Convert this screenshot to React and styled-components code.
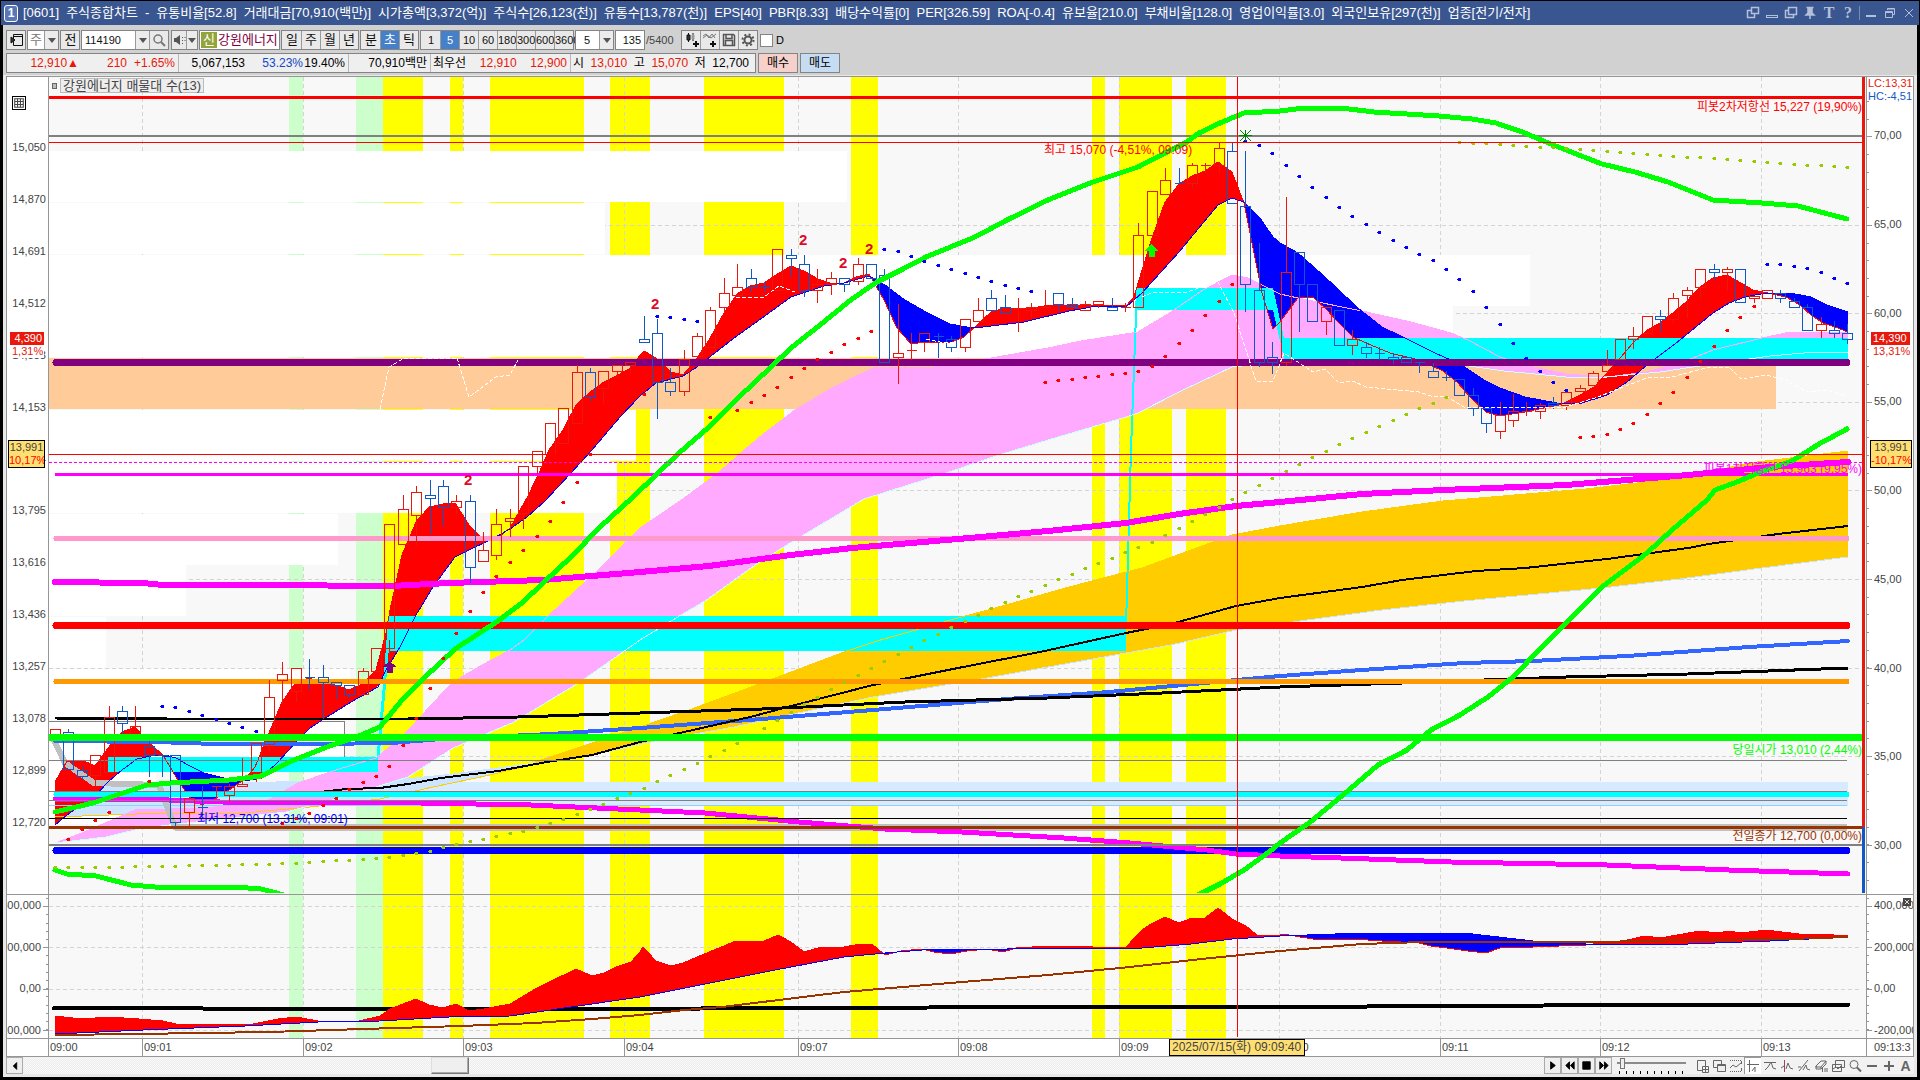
import React from "react";
import styled, { createGlobalStyle, css } from "styled-components";

const Global = createGlobalStyle`
  * { box-sizing: border-box; }
  body { margin: 0; background: #000; }
  button, input, select { font: inherit; color: inherit; margin: 0; padding: 0; border-radius: 0; }
`;

const FONT = `"Liberation Sans", "Noto Sans CJK KR", sans-serif`;
const RED = "#e8180c";
const BLUE = "#1158c7";

/* ---------- frame ---------- */
const Frame = styled.div`
  display: flex; flex-direction: column; height: 100vh; min-height: 480px;
  padding: 1px 0 3px; background: #000; overflow: hidden;
  font: 12px/14px ${FONT}; color: #000;
`;
const TitleBar = styled.header`
  display: flex; align-items: center; gap: 5px; flex: none; height: 24px; margin: 0 1px; padding: 0 1px 0 3px;
  background: #3a5690; color: #fff; font-size: 13px; white-space: nowrap;
`;
const Badge = styled.span`
  width: 14px; height: 17px; border: 1px solid #fff; border-radius: 3px; background: #5a78b8;
  font-weight: 700; font-size: 12px; line-height: 15px; text-align: center;
`;
const Title = styled.h1`
  display: flex; gap: 7px; margin: 0; flex: 1; min-width: 0; overflow: hidden; font: inherit; line-height: 20px;
`;
const WinTools = styled.div`display: flex; align-items: center; gap: 1px;`;
const WinButton = styled.button`
  display: grid; place-items: center; width: 18px; height: 20px; border: 0; background: none; color: #b4c0da;
  font: 700 16px/18px "Liberation Serif", serif;
`;
const WinRule = styled.i`width: 1px; height: 14px; margin: 0 1px; background: #7a8fae;`;
const Body = styled.main`
  display: flex; flex-direction: column; flex: 1; min-height: 0; margin: 0 3px; background: #d1d1d1;
`;
const Bar = styled.div`
  display: flex; align-items: stretch; flex: none; height: 20px; margin: ${p => (p.$info ? "3px 3px 2px" : "5px 3px 0")};
  gap: ${p => (p.$info ? 2 : 1)}px; white-space: nowrap;
  font-size: ${p => (p.$info ? 12 : 13)}px; line-height: 16px;
`;

/* ---------- toolbar ---------- */
const Group = styled.div`
  display: flex; align-items: stretch; flex: none; border: 1px solid #848484; background: #fff;
  margin-right: ${p => p.$gap || 0}px;
`;
const Tool = styled.button`
  display: grid; place-items: center; width: ${p => p.$w || 19}px; border: 0; overflow: visible;
  background: ${p => (p.$on ? "#4580c8" : "#e9e9e9")}; color: ${p => (p.$on ? "#fff" : "#111")};
  border-left: 1px solid ${p => (p.$first ? "transparent" : "#9a9a9a")};
  ${p => p.$digits && css`font-size: 11px;`}
`;
const Field = styled.input`
  width: ${p => p.$w}px; border: 0; background: #fff; padding: 0 ${p => (p.$name ? 0 : 3)}px;
  color: ${p => (p.$name ? "#800040" : "#111")}; font-size: ${p => (p.$name ? 13 : 11)}px;
  text-align: ${p => p.$align || "left"}; outline: 0;
`;
const Pick = styled.select`
  appearance: none; width: ${p => p.$w}px; border: 0; background: #fff; color: ${p => p.$color || "#111"};
  padding: 0 ${p => p.$pad || 2}px; outline: 0; font-size: ${p => (p.$pad ? 11 : 13)}px;
`;
const Arrow = styled.span`
  display: grid; place-items: center; width: ${p => p.$w || 14}px; background: #ececec; border-left: 1px solid #9a9a9a;
  &::after { content: ""; border: 4px solid transparent; border-top: 5px solid #555; border-bottom: 0; }
`;
const NewTag = styled.span`
  display: grid; place-items: center; width: 16px; margin: 1px; background: #93a53a; color: #fff;
`;
const Count = styled.span`align-self: center; color: #444; width: 34px; font-size: 11px;`;
const Check = styled.label`
  display: flex; align-items: center; gap: 3px; font-size: 11px;
  input { appearance: none; width: 13px; height: 13px; border: 1px solid #848484; background: #fff; }
`;

/* ---------- quote bar ---------- */
const Quote = styled.dl`
  display: flex; flex: none; margin: 0; border: 1px solid #848484; background: #efefef; line-height: 18px;
`;
const QuoteCell = styled.div`
  display: flex; justify-content: ${p => p.$just || "flex-end"}; width: ${p => p.$w}px;
  padding: 0 3px 0 2px; border-right: 1px solid #b8b8b8;
  &:last-child { border-right: 0; padding-right: 6px; }
  dt, dd { margin: 0; }
`;
const Num = styled.dd`
  color: ${p => p.$c || "#000"}; width: ${p => (p.$w ? p.$w + "px" : "auto")}; text-align: right;
`;
const Order = styled.button`
  width: 40px; border: 1px solid #848484; background: ${p => p.$bg};
`;

/* ---------- chart ---------- */
const Work = styled.section`
  display: flex; flex-direction: column; flex: 1; min-height: 0; padding: 1px 3px 3px; background: #e8e8e8;
`;
const Chart = styled.div`
  display: grid; flex: 1; min-height: 0; border: 1px solid #969696; background: #fff;
  grid-template-columns: 42px minmax(0, 1fr) 47px; grid-template-rows: minmax(0, 817fr) minmax(0, 144fr) 18px;
  font-size: 11px; color: #444;
`;
const Plot = styled.div`
  position: relative; grid-column: 2; grid-row: 1 / 3; min-height: 0; background: #f8f8f8; overflow: hidden;
  > svg { display: block; width: 100%; height: 100%; }
`;
const Axis = styled.div`
  position: relative; display: flex; flex-direction: column; justify-content: space-between; min-height: 0;
  overflow: hidden; white-space: nowrap; grid-row: ${p => (p.$low ? 2 : 1)};
  ${p => (p.$side === "left"
    ? css`grid-column: 1; align-items: flex-end; border-right: 1px solid #969696; padding-right: ${p.$low ? 7 : 2}px;`
    : css`grid-column: 3; align-items: flex-start; border-left: 1px solid #969696; padding-left: 7px;`)}
  ${p => (p.$low
    ? css`border-top: 1px solid #969696; padding-top: 3px; padding-bottom: 1px;`
    : p.$side === "left" ? css`padding-top: 63px; padding-bottom: 65px;` : css`padding-top: 51px; padding-bottom: 42px;`)}
  > svg { position: absolute; inset: 0; width: 100%; height: 100%; }
`;
const Tick = styled.span`line-height: 14px; position: relative;`;
const Over = styled.div`
  position: absolute; z-index: 1; white-space: nowrap; line-height: 13px; overflow: hidden;
`;
const PriceTag = styled(Over)`
  ${p => (p.$side === "left" ? "left: 3px; width: 34px; text-align: right;" : "left: 4px; right: 3px;")}
  span { display: block; background: ${RED}; color: #fff; padding: 0 2px; }
  b { display: block; font-weight: 400; color: ${RED}; padding: 0 2px; background: #fff; }
`;
const CursorTag = styled(Over)`
  ${p => (p.$side === "left" ? "left: 1px; right: 3px;" : "left: 3px; right: 1px;")}
  border: 1px solid #000; background: #ffdf70; text-align: center;
  b { display: block; font-weight: 400; color: #f00; }
`;
const Limits = styled(Over)`
  left: 1px; top: 0;
  span { display: block; color: ${RED}; }
  span + span { color: ${BLUE}; }
`;
const Note = styled.span`
  position: absolute; white-space: nowrap; color: ${p => p.$c};
  font: ${p => (p.$bold ? "700 15px/14px " + FONT : "12px/14px " + FONT)};
  transform: translateY(-50%);
`;
const Legend = styled.div`
  position: absolute; left: 3px; top: 1px; display: flex; align-items: center; gap: 3px; color: #444;
  i { width: 5px; height: 6px; border: 1px solid #666; background: #bbb; }
  button { height: 15px; border: 1px solid #bbb; background: #eee; padding: 0 2px; line-height: 13px; font-size: 13px; }
`;
const TableButton = styled.button`
  position: absolute; left: 5px; top: 19px; width: 14px; height: 14px; border: 1px solid #000; background: #fff;
  display: grid; place-items: center;
`;
const ClosePane = styled.button`
  position: absolute; right: 2px; top: 3px; width: 8px; height: 8px; border: 0; background: #444; color: #fff; z-index: 1;
  display: grid; place-items: center;
`;
const Times = styled.div`
  position: relative; grid-column: 2; grid-row: 3; display: grid; border-top: 1px solid #969696; min-width: 0;
  grid-template-columns: 93fr 161fr 160fr 161fr 174fr 160fr 161fr 160fr 161fr 160fr 161fr 105fr;
`;
const TimeCell = styled.time`
  border-left: ${p => (p.$first ? 0 : 1)}px solid #969696; padding-left: 1px; min-width: 0; line-height: 16px; overflow: hidden; white-space: nowrap;
`;
const TimeEnd = styled.time`
  grid-column: 3; grid-row: 3; border-top: 1px solid #969696; border-left: 1px solid #969696; padding-left: 7px;
  line-height: 16px; overflow: hidden; white-space: nowrap;
`;
const TimeCorner = styled.div`grid-column: 1; grid-row: 3; border-top: 1px solid #969696; border-right: 1px solid #969696;`;
const TimeCursor = styled.time`
  position: absolute; top: 0; bottom: 0; border: 1px solid #000; background: #ffdf70; padding: 0 2px;
  font: 12px/14px ${FONT}; white-space: nowrap; overflow: hidden;
`;

/* ---------- bottom bar ---------- */
const Foot = styled.footer`display: flex; align-items: center; flex: none; height: 17px; background: #f2f2f2;`;
const Raised = styled.button`
  display: grid; place-items: center; flex: none; width: 17px; height: 17px; background: #efefef;
  border: 1px solid; border-color: #fff #777 #777 #fff; outline: 1px solid #aaa; outline-offset: -1px;
`;
const Scroll = styled.input`
  appearance: none; flex: 1; min-width: 0; height: 17px; outline: 0;
  background: repeating-conic-gradient(#ececec 0 25%, #fafafa 0 50%) 0 0 / 2px 2px;
  &::-webkit-slider-thumb {
    appearance: none; width: 38px; height: 17px; background: #efefef; border: 1px solid; border-color: #ddd #777 #777 #ddd;
    box-shadow: inset -1px -1px #aaa;
  }
`;
const Zoom = styled.input`
  appearance: none; width: 69px; height: 17px; margin: 0 7px 0 5px; outline: 0;
  background:
    linear-gradient(#8a8a8a, #8a8a8a) 0 5px / 100% 2px no-repeat,
    repeating-linear-gradient(90deg, #000 0 1px, transparent 1px 7px) 2px 14px / 100% 3px no-repeat;
  &::-webkit-slider-thumb { appearance: none; width: 5px; height: 11px; margin-top: -4px; background: #eee; border: 1px solid #777; }
`;
const Mini = styled.button`
  display: grid; place-items: center; flex: none; width: 17px; height: 17px; border: 0; color: #666;
  background: ${p => (p.$on ? "#fff" : "none")}; box-shadow: ${p => (p.$on ? "inset 1px 1px #999" : "none")};
  font: 700 14px/16px ${FONT};
`;

/* ---------- data ---------- */
const pts = s => s.trim().split(/\s+/).map(p => p.split(",").map(Number));
const cx = i => 55.5 + 13.375 * i;
const at = (p, x) => {
  if (x <= p[0][0]) return p[0][1];
  for (let k = 1; k < p.length; k++)
    if (x <= p[k][0]) {
      const [a, b] = [p[k - 1], p[k]];
      return a[1] + ((b[1] - a[1]) * (x - a[0])) / (b[0] - a[0] || 1);
    }
  return p[p.length - 1][1];
};

/* areas between two lines, split wherever the lines cross */
const between = (fast, slow) => {
  const up = [], down = [];
  const step = 3;
  for (let x = 55; x < 1848; x += step) {
    const x2 = Math.min(x + step, 1848);
    const f1 = at(fast, x), f2 = at(fast, x2), s1 = at(slow, x), s2 = at(slow, x2);
    (f1 + f2 <= s1 + s2 ? up : down).push(`M${x} ${f1}L${x2} ${f2}V${s2}L${x} ${s1}Z`);
  }
  return [up.join(""), down.join("")];
};

const FAST = pts(`55,782 67,761 84,761 95,766 108,748 122,732 135,727 148,742 163,755 176,777 189,797 202,805 216,798 229,790 245,779 255,767 269,733 282,702 296,682 309,678 322,682 335,685 349,690 362,684 376,670 386,633 390,610 402,555 416,522 429,507 443,504 455,503 469,525 484,541 496,539 510,528 524,503 527,498 539,473 549,450 563,430 576,405 590,392 604,382 616,376 631,368 640,355 644,351 656,358 671,372 683,375 697,358 709,340 724,313 737,294 750,286 764,283 779,273 791,266 804,271 818,279 830,283 844,283 856,277 869,274 884,300 897,328 911,344 926,342 938,342 952,342 964,337 979,323 991,312 1005,308 1018,308 1032,308 1044,306 1058,305 1126,306 1134,297 1139,280 1152,238 1165,202 1179,184 1192,176 1205,171 1218,162 1232,172 1244,203 1252,243 1262,293 1273,329 1280,322 1298,298 1313,297 1326,309 1339,323 1353,337 1366,343 1390,353 1419,360 1443,371 1458,383 1470,397 1486,412 1500,416 1525,412 1562,404 1580,395 1594,387 1607,373 1621,357 1633,343 1647,330 1660,323 1674,312 1686,302 1700,287 1713,278 1727,275 1741,283 1753,290 1768,293 1786,297 1800,305 1811,315 1823,323 1835,327 1848,332`);
const SLOW = pts(`55,825 67,815 96,795 108,782 122,770 137,759 151,756 165,755 176,758 188,765 204,773 224,778 245,781 261,778 278,762 298,740 310,728 327,717 351,702 378,687 386,670 400,647 416,615 433,587 455,557 469,550 490,540 510,529 527,517 545,501 571,473 592,450 620,417 640,396 656,383 683,376 697,367 734,338 762,318 791,297 824,286 844,283 869,276 885,285 905,300 926,312 950,324 967,327 983,327 1024,322 1069,311 1097,306 1126,307 1142,293 1179,252 1218,205 1232,198 1244,202 1260,218 1273,237 1280,243 1298,253 1325,277 1358,308 1382,327 1407,339 1435,353 1460,364 1484,380 1500,388 1525,397 1562,404 1582,403 1607,395 1627,382 1647,365 1680,340 1713,313 1729,303 1745,297 1766,293 1790,293 1811,297 1827,305 1848,312`);
const FAST2 = pts(`55,1016 82,1019 108,1017 139,1019 163,1021 176,1024 253,1024 278,1019 296,1017 318,1021 347,1022 359,1021 380,1016 390,1009 416,999 429,1005 443,1008 456,1004 469,1011 484,1009 510,1004 535,989 576,969 592,976 604,973 616,967 631,962 640,952 643,947 656,961 671,966 683,963 709,952 736,941 764,941 778,935 791,942 804,952 818,948 844,947 860,944 873,945 885,955 901,951 922,949 934,952 950,954 967,951 987,949 1003,952 1016,948 1048,946 1093,947 1109,948 1126,947 1142,930 1151,924 1165,917 1179,923 1192,918 1205,918 1218,908 1232,919 1246,926 1258,936 1280,935 1284,934 1300,937 1313,939 1339,940 1353,939 1382,941 1419,943 1431,946 1447,948 1468,951 1486,953 1500,948 1533,947 1586,945 1600,943 1623,941 1645,936 1660,938 1700,931 1717,933 1729,931 1741,933 1766,930 1807,935 1819,934 1848,936`);
const SLOW2 = pts(`55,1034 143,1030 245,1026 318,1022 380,1021 449,1017 510,1016 571,1007 640,997 705,984 775,970 844,957 885,953 922,950 1007,949 1016,948 1126,949 1142,948 1191,944 1232,939 1280,936 1362,933 1464,933 1533,941 1586,944 1688,944 1770,941 1848,937`);
const [UP, DOWN] = between(FAST, SLOW);
const [UP2, DOWN2] = between(FAST2, SLOW2);

const BAND_UP = "55,812 93,803 147,785 171,783 229,780 261,776 294,760 327,747 359,736 380,727 402,700 424,678 455,649 498,621 522,603 543,583 571,557 600,527 633,497 679,453 709,427 738,398 771,367 791,348 820,325 852,299 877,282 901,270 926,257 975,237 1007,220 1048,200 1093,182 1138,167 1167,152 1187,142 1199,133 1220,123 1244,113 1280,111 1304,108 1341,108 1374,112 1439,116 1472,119 1496,123 1525,133 1541,140 1566,150 1602,164 1635,172 1668,182 1713,200 1762,203 1798,206 1847,219";
const BAND_LOW_A = "55,870 67,874 96,876 131,885 155,887 235,887 261,889 284,895";
const BAND_LOW_B = "1196,896 1220,884 1244,870 1269,852 1280,843 1309,823 1343,795 1378,765 1407,750 1431,730 1460,715 1488,697 1513,677 1541,648 1566,623 1602,587 1647,553 1672,530 1707,500 1715,490 1737,482 1758,473 1792,461 1819,444 1847,429";
const MAG = "55,582 143,583 163,585 261,585 392,586 449,583 543,580 640,572 709,566 791,555 852,548 958,539 1048,531 1126,523 1179,514 1236,506 1280,502 1362,494 1443,490 1566,485 1688,475 1770,467 1848,462";
const MAG_LOW = "55,799 143,799 220,802 420,803 531,805 640,810 705,813 799,822 885,829 962,832 1064,838 1130,843 1207,850 1236,854 1280,856 1341,858 1451,862 1607,865 1729,870 1848,874";
const LONG = "55,718 167,719 408,719 518,717 640,713 762,709 905,702 1048,698 1162,693 1280,687 1402,683 1566,677 1688,674 1848,668";
const MID = "55,796 155,794 261,795 310,793 347,789 380,788 408,784 441,778 498,771 547,762 592,755 640,742 693,730 750,717 799,704 873,685 958,668 1040,652 1126,633 1171,624 1236,606 1280,598 1362,587 1402,580 1476,571 1525,568 1607,559 1688,548 1709,544 1778,534 1848,526";
const BLUE_MA = "55,741 155,742 216,744 318,744 392,743 441,739 551,734 640,728 762,719 885,709 1007,699 1109,692 1183,685 1280,676 1362,670 1464,663 1533,661 1627,656 1749,647 1848,641";
const GOLD_TOP = "535,762 640,727 689,710 762,683 844,652 877,641 958,618 995,608 1069,587 1126,572 1142,568 1232,535 1280,526 1362,512 1443,501 1586,489 1688,477 1749,463 1848,451";
const GOLD_BOT = "1848,557 1762,568 1680,579 1602,588 1464,601 1382,610 1300,621 1236,630 1171,645 1126,653 987,678 873,697 803,712 734,727 660,740 592,755 539,764";
const GOLD_LINE = "55,817 163,813 245,813 310,807 380,799 433,787 490,775 539,763";
const PINK_TOP = "55,843 82,833 135,810 204,808 265,802 298,783 339,769 376,758 402,737 433,703 453,682 482,665 510,650 524,640 547,617 596,572 640,528 683,499 718,473 742,452 762,435 795,410 832,388 873,368 934,367 991,358 1048,348 1081,341 1138,332 1171,312 1203,290 1232,275 1248,278 1280,294 1298,298 1362,311 1411,322 1451,333 1468,340 1500,357 1525,365 1566,374 1607,377 1647,372 1688,360 1713,350 1762,338 1790,332 1848,333";
const PINK_BOT = "55,843 106,837 143,828 196,822 286,812 347,796 408,777 453,748 514,722 580,682 640,640 681,615 705,601 758,563 795,540 864,499 946,473 999,455 1048,440 1126,417 1138,413 1183,390 1232,367 1252,365 1280,366 1333,362 1382,362 1455,364 1504,371 1566,377 1607,377 1660,372 1713,364 1770,356 1815,352 1848,352";
const rev = s => s.split(" ").reverse().join(" ");
const WHITE = [
  "380,409 389,367 404,358 457,358 469,397 496,377 510,375 518,360",
  "736,297 764,297 779,286 795,292", "844,305 880,283", "926,339 940,342 952,342",
  "1142,297 1154,292 1187,292 1218,282 1234,313 1256,381 1273,381 1284,353 1313,372 1325,369 1339,383 1353,381 1366,387 1419,392 1431,396 1447,397 1464,407 1566,407 1598,397 1623,387 1647,378 1672,377 1709,367 1729,367 1741,379 1766,375 1786,380 1807,392 1827,390 1847,396",
];

/* index, rising, body top, body bottom, high, low */
const CANDLES = [
  [0,1,729,740,729,740],[1,0,732,769,729,769],[2,0,770,776,766,779],[3,1,755,775,755,785],[4,1,717,772,706,772],[5,0,711,723,706,733],
  [6,1,726,737,706,737],[7,0,746,755,737,776],[8,0,755,755,755,776],[9,0,755,822,755,826],[10,1,798,812,798,826],[11,0,807,807,786,815],
  [12,1,786,786,786,798],[13,1,786,795,784,800],[14,1,784,786,758,786],[15,1,743,778,743,781],[16,1,697,744,680,750],[17,1,674,680,662,703],
  [18,1,668,691,668,701],[19,0,677,677,659,689],[20,0,677,682,665,718],[21,0,682,685,682,698],[22,0,685,694,685,697],[23,1,671,694,668,694],
  [24,1,648,671,648,671],[25,1,524,648,524,660],[26,1,509,544,495,544],[27,1,492,515,486,544],[28,0,495,498,480,533],[29,0,486,507,480,525],
  [30,1,501,507,495,513],[31,0,501,567,495,582],[32,1,550,561,532,561],[33,1,524,555,509,559],[34,1,518,521,509,536],[35,1,466,513,466,528],
  [36,1,451,466,451,473],[37,1,423,454,423,454],[38,1,408,443,408,443],[39,1,372,423,365,423],[40,0,372,397,368,400],[41,1,371,388,371,403],
  [42,1,365,371,365,377],[43,1,362,365,362,373],[44,0,339,342,316,342],[45,0,333,382,319,418],[46,0,382,391,368,395],[47,1,359,391,350,395],
  [48,1,336,356,333,356],[49,1,310,347,307,347],[50,1,293,307,278,312],[51,1,287,295,264,295],[52,0,278,287,269,291],[53,0,287,287,282,291],
  [54,1,249,290,249,290],[55,0,255,258,249,276],[56,0,264,290,255,296],[57,1,284,290,269,302],[58,1,278,284,272,294],[59,0,278,284,278,291],
  [60,1,264,281,258,284],[61,0,264,278,264,278],[62,0,275,362,269,362],[63,1,353,357,304,383],[64,1,350,350,333,359],[65,1,333,342,333,351],
  [66,0,336,336,333,357],[67,0,339,347,336,351],[68,1,319,347,319,351],[69,1,310,321,298,321],[70,0,298,310,290,310],[71,0,307,313,295,313],
  [72,1,308,308,298,331],[73,1,307,310,303,317],[74,1,307,307,290,307],[75,0,293,304,293,310],[76,0,304,307,298,307],[77,1,304,310,301,310],
  [78,1,301,304,301,307],[79,0,307,310,298,310],[80,1,307,307,303,311],[81,1,235,307,223,307],[82,1,191,235,191,235],[83,1,180,194,168,194],
  [84,0,183,183,168,183],[85,1,165,183,163,187],[86,1,165,165,163,172],[87,1,148,165,142,172],[88,0,151,203,142,203],[89,0,206,284,151,311],
  [90,0,290,362,243,366],[91,0,357,362,342,373],[92,1,272,362,197,365],[93,0,252,284,252,331],[94,0,284,321,284,321],[95,1,307,321,307,334],
  [96,0,310,345,310,345],[97,1,339,345,330,354],[98,0,347,353,342,357],[99,0,353,353,347,359],[100,0,357,359,353,363],[101,0,357,362,357,362],
  [102,0,362,362,362,372],[103,0,371,377,363,377],[104,0,377,377,371,380],[105,0,379,395,379,395],[106,0,395,408,388,415],[107,0,408,423,408,432],
  [108,1,415,431,402,438],[109,1,411,420,394,426],[110,1,411,411,402,415],[111,1,405,411,403,418],[112,0,403,405,397,408],[113,1,392,405,391,409],
  [114,1,388,391,385,391],[115,1,373,385,371,385],[116,1,365,371,350,371],[117,1,339,359,339,359],[118,1,336,339,327,348],[119,1,316,333,316,333],
  [120,0,316,319,310,331],[121,1,298,319,293,322],[122,1,290,295,287,317],[123,1,269,287,269,298],[124,0,269,272,264,279],[125,1,269,272,267,290],
  [126,0,269,302,269,302],[127,1,296,298,296,302],[128,1,290,298,290,298],[129,0,293,298,290,302],[130,0,301,307,298,307],[131,0,307,330,304,330],
  [132,1,324,330,317,337],[133,0,330,333,321,337],[134,0,333,339,324,343],
];

/* stop-and-reverse dots: colour, first index, heights */
const DOTS = [
  ["#0000ff", 8, [706,707,711,715,719,723,727,731]],
  ["#0000ff", 45, [316,317,319,321]],
  ["#0000ff", 62, [249,251,256,261,265,269,273,277,281,285,288,291]],
  ["#0000ff", 89, [141,145,153,165,176,187,197,207,216,224,232,240,247,254,260,269,279,291,307,324,343,358,371,382,390]],
  ["#0000ff", 128, [264,264,266,268,272,278,283]],
  ["#ff0000", 1, [839,829,820,812]],
  ["#ff0000", 7, [781]],
  ["#ff0000", 17, [823,818,813,805,798,789,782,776,766,745,718,688,658,633,611,592,576,562,550,536,521,502,482,454]],
  ["#ff0000", 44, [394]],
  ["#ff0000", 49, [417]],
  ["#ff0000", 51, [410,402,395,387,377,368,359,352,344,338,331]],
  ["#ff0000", 74, [382,380,379,377,376,374,373,371,366,356,343,330,315,301,284]],
  ["#ff0000", 114, [437,436,434,429,423,414,403,392,377,361,346,330,317,306]],
  ["#99cc00", 0, [867,867,867,867,867,867,866,866,866,866,865,865,865,865,864,864,864,863,863,862,861,860,860,859,858,857,855,853,851,847,844,841,839,836,833,831,827,823,819,814,809,804,798,793,788,781,775,769,763,756,750,743,735,728,720,712,704,697,689,682,675,668,661,654,647,640,634,627,621,615,608,602,596,591,585,579,574,568,563,558,552,547,542,535,528,521,514,507,499,492,485,478,471,464,457,451,444,438,432,426,420,414,408,403,397]],
  ["#99cc00", 105, [142,143,143,144,145,146,147,147,148,149,150,151,152,153,154,155,156,157,157,158,159,160,161,162,163,164,165,165,166,167]],
];

const ZONES = [
  [289,303,"#ccffcc"],[356,383,"#ccffcc"],[383,423],[450,463],[490,584],[610,650],[704,784],[851,878],[1092,1105],[1119,1172],[1186,1226],
];
/* volume at price: top, right end */
const PROFILE = [[151,847],[203,605],[255,1530],[306,1453],[358,1776],[410,636],[462,617],[514,338],[565,186],[617,106],[669,350],[721,344],[773,156]];
const VGRID = [142,303,463,624,798,958,1119,1279,1440,1600,1761];
const HGRID = [225,313,402,490,579,668,756,906,947,989,1030];

const HL = ({ y, c, w = 1, a = 49, b = 1862, cap }) => (
  <path d={`M${a} ${y + (w % 2 ? 0.5 : 0)}H${b}`} stroke={c} strokeWidth={w} strokeLinecap={cap ? "round" : "butt"} fill="none" />
);
const Curve = ({ p, c, w = 1, d }) => (
  <polyline points={p} stroke={c} strokeWidth={w} fill="none" strokeDasharray={d} strokeLinejoin="round" strokeLinecap={w > 3 ? "round" : "butt"} />
);
const line = a => a.map(p => p.join(",")).join(" ");

const PlotDrawing = () => (
  <svg viewBox="49 77 1817 961" preserveAspectRatio="none" shapeRendering="crispEdges" aria-hidden="true">
    <clipPath id="upper"><rect x="49" y="77" width="1817" height="816" /></clipPath>
    {ZONES.map(([a, b, c = "#ffff00"]) => <rect key={a} x={a} y="77" width={b - a} height="961" fill={c} />)}
    <g stroke="#d4d4d4" strokeDasharray="4 3">
      {VGRID.map(x => <path key={x} d={`M${x + 0.5} 77V1038`} />)}
      {HGRID.map(y => <path key={y} d={`M49 ${y + 0.5}H1862`} />)}
    </g>
    {PROFILE.map(([y, r]) => <rect key={y} x="49" y={y} width={r - 49} height="51" fill={y === 358 ? "#ffcc99" : "#fff"} />)}
    <path d="M49 721.5H344.5V757" fill="none" stroke="#808080" />
    <g clipPath="url(#upper)">
      <HL y={136} c="#808080" w={2} />
      <rect x="55" y="782" width="1793" height="24" fill="#d6ebff" />
      <polygon points={`55,786 400,779 449,774 539,762 ${rev(GOLD_LINE)}`} fill="#cce4ff" />
      <polygon points={`${PINK_TOP} ${rev(PINK_BOT)}`} fill="#ffaaff" />
      <polygon points={`${GOLD_TOP} ${GOLD_BOT}`} fill="#ffcc00" />
      <path d={UP} fill="#ff0000" />
      <path d={DOWN} fill="#0000ff" />
      <g fill="#00ffff">
        <rect x="108" y="757" width="270" height="15" />
        <rect x="390" y="616" width="736" height="35" />
        <rect x="1137" y="288" width="136" height="22" />
        <rect x="1284" y="338" width="564" height="21" />
        <polygon points="1273,288 1284,338 1284,359 1273,310" />
      </g>
      <Curve p="378,757 384,690 390,616" c="#00ffff" w={3} />
      <Curve p="1126,626 1131,450 1137,288" c="#00ffff" w={2} />
      <Curve p={GOLD_LINE} c="#ffcc00" />
      <Curve p={GOLD_TOP} c="#ffcc00" />
      <Curve p={PINK_TOP} c="#ffaaff" />
      <Curve p={PINK_BOT} c="#ccffff" />
      <Curve p={GOLD_BOT} c="#cce4ff" />
      <Curve p="53,738 65,763 94,783 159,785 175,827" c="#c0c0c0" w={6} />
      <Curve p={line(FAST)} c="#ff0000" />
      <Curve p={line(SLOW)} c="#0000ff" />
      <Curve p={BLUE_MA} c="#3366ff" w={4} />
      <Curve p={LONG} c="#000" w={3} />
      <Curve p={MID} c="#000" w={2} />
      <HL y={362} c="#800080" w={7} a={56} b={1847} cap />
      <HL y={538} c="#ff99cc" w={5} a={56} b={1847} cap />
      <HL y={625} c="#ff0000" w={7} a={56} b={1847} cap />
      <HL y={681} c="#ff9900" w={5} a={56} b={1847} cap />
      <HL y={474} c="#ff00ff" w={3} a={55} b={1848} />
      <HL y={794} c="#00ffff" w={5} a={56} b={1847} cap />
      <HL y={791} c="#808080" b={1847} />
      <HL y={805} c="#99ccff" b={1847} />
      <HL y={760} c="#808080" b={1847} />
      <HL y={850} c="#0000ff" w={7} a={56} b={1847} cap />
      <HL y={827} c="#c0c0c0" w={7} a={175} b={1847} />
      <Curve p={MAG_LOW} c="#ff00ff" w={5} />
      <HL y={800} c="#808080" b={1847} />
      <HL y={827} c="#993300" w={3} />
      <HL y={845} c="#808080" w={2} />
      <HL y={818} c="#000" b={1847} />
      <Curve p={MAG} c="#ff00ff" w={6} />
      {CANDLES.map(([i, up, t, b, h, l]) => {
        const x = Math.floor(cx(i)) + 0.5;
        return <path key={i} d={`M${x} ${h}V${t}M${x} ${b}V${l + 1}M${x - 5} ${t + 0.5}H${x + 5}V${b + 0.5}H${x - 5}Z`} fill="none" stroke={up ? RED : BLUE} />;
      })}
      {WHITE.map(p => <Curve key={p} p={p} c="#fff" d="4 2" />)}
      <Curve p={BAND_UP} c="#00ff00" w={5} />
      <Curve p={BAND_LOW_A} c="#00ff00" w={5} />
      <Curve p={BAND_LOW_B} c="#00ff00" w={5} />
      {DOTS.map(([c, from, ys]) => ys.map((y, k) => <ellipse key={c + from + k} cx={Math.floor(cx(from + k)) + 0.5} cy={y + 0.5} rx="2" ry="2" fill={c} />))}
      <HL y={737} c="#00ff00" w={7} />
      <HL y={97} c="#ff0000" w={3} />
      <HL y={142} c="#ff0000" />
      <path d="M389.5 661l7 6h-4v6h-6v-6h-4z" fill="#800080" />
      <path d="M1151.5 244l7 7h-4v6h-6v-6h-4z" fill="#00ff00" />
      <path d="M1245.5 130v11M1240 130l11 11M1251 130l-11 11M1239 135.5h13" stroke="#008000" />
    </g>
    <HL y={454} c="#ff0000" />
    <path d="M49 462.5H1862" stroke="#ff00ff" strokeDasharray="3 2" />
    <rect x="1862" y="77" width="3" height="750" fill={RED} />
    <rect x="1862" y="827" width="3" height="66" fill={BLUE} />
    <HL y={894} c="#969696" b={1866} />
    <Curve p="54,1008 202,1008 204,1009 640,1009 762,1008 1097,1007 1280,1007 1633,1005 1848,1005" c="#000" w={4} />
    <path d={UP2} fill="#ff0000" />
    <path d={DOWN2} fill="#0000ff" />
    <Curve p={line(FAST2)} c="#ff0000" />
    <Curve p={line(SLOW2)} c="#0000ff" />
    <Curve p="55,1035 135,1034 269,1032 363,1029 461,1026 535,1023 592,1019 640,1015 685,1010 722,1007 803,997 844,992 950,983 1048,975 1130,967 1211,958 1280,951 1362,944 1423,942 1598,942 1688,940 1790,939 1848,937" c="#993300" w={2} />
    <path d="M1237.5 77V1037" stroke="#ff0000" />
  </svg>
);

const marks = (from, to, step) => {
  const out = [];
  for (let y = from; y <= to; y += step) out.push(Math.round(y));
  return out;
};
const MAIN_MAJOR = [136, 225, 313, 402, 490, 579, 668, 756, 845];
const LOW_MAJOR = [906, 947, 989, 1030];
const MAIN_MINOR = marks(101, 890, 17.7);
const LOW_MINOR = marks(898, 1036, 8.2);

const TickMarks = ({ left, major = [], minor, h, top }) => {
  const w = left ? 41 : 46;
  const draw = (ys, len) => ys.map(y => `M${left ? w - len : 0} ${y - top + 0.5}h${len}`).join("");
  return (
    <svg viewBox={`0 0 ${w} ${h}`} preserveAspectRatio="none" shapeRendering="crispEdges" aria-hidden="true">
      <path d={draw(minor, 2) + draw(major, 5)} stroke="#969696" />
    </svg>
  );
};

const NOTES = [
  [1044, 150, "#ff0000", "최고 15,070 (-4,51%, 09:09)"],
  [197, 819, "#0000ff", "최저 12,700 (13,31%, 09:01)"],
  [null, 107, "#ff0000", "피봇2차저항선 15,227 (19,90%)"],
  [null, 469, "#ff00ff", "피봇1차저항선 13,963 (9,95%)"],
  [null, 750, "#00ff00", "당일시가 13,010 (2,44%)"],
  [null, 836, "#993300", "전일종가 12,700 (0,00%)"],
];
const SIGNALS = [[464, 480], [651, 304], [799, 240], [839, 263], [865, 249]];
const px = x => `${((x - 49) / 1817) * 100}%`;
const py = y => `${((y - 77) / 961) * 100}%`;
const paneY = y => ({ top: `${((y - 77) / 817) * 100}%` });

/* ---------- icons ---------- */
const Svg = ({ s = 14, children, w = 1, fill = "none" }) => (
  <svg width={s} height={s} viewBox="0 0 14 14" fill={fill} stroke="currentColor" strokeWidth={w} aria-hidden="true">{children}</svg>
);
const WIN = [
  ["새 창", <Svg key="a"><path d="M5.500 1.500h7v6h-7zM5 4.500H1.500v7h7v-3.500" strokeWidth="1.500" /></Svg>],
  ["내리기", <Svg key="b"><rect x="1.500" y="9.500" width="11" height="2" /></Svg>],
  ["복사", <Svg key="c"><path d="M4.500 1.500h8v7h-8zM4 4.500H1.500v7h8V9" strokeWidth="1.500" /></Svg>],
  ["고정", <Svg key="d" fill="currentColor"><path d="M3.500 1.500h7M5 2h4v5l2 2H3l2-2zM7 9v4" strokeWidth="1.500" /></Svg>],
];
const WIN2 = [
  ["최소화", <Svg key="a"><path d="M2 10h10" strokeWidth="2" /></Svg>],
  ["이전 크기", <Svg key="b"><path d="M4.500 4V2.500h7v6H10M2.500 5.500h7v6h-7zM2.500 6.500h7M4.500 3h7" /></Svg>],
  ["닫기", <Svg key="c"><path d="M3 3l8 8M11 3l-8 8" /></Svg>],
];
const MINI = [
  ["창 추가", <><path d="M2.500 1.500h8v6M2.500 1.500v10H7" /><path d="M7.500 7.500h6v6h-6zM10.500 7.500v6M7.500 10.500h6" /></>],
  ["창 복사", <><path d="M1.500 1.500h8v7h-8z" /><path d="M5.500 5.500h8v7h-8z" fill="#eee" /><path d="M5.500 6.500h8" /></>],
  ["기간", <><path d="M1 1.500h12M1 12.500h12" strokeDasharray="1 1" /><path d="M1 9l3-3 3 2 5-4M12.500 2v3M12.500 9v3" /></>],
  ["십자선", <><path d="M3.500 1v12M1 5.500h12M6 12l3-4M9 8v5" /></>, 1],
  ["수평선", <><path d="M1 3.500h12M2 11l3-3 3-5 2 6 3 1" /></>],
  ["수직선", <><path d="M4.500 1v12" stroke="#a04060" /><path d="M1 9l3-2M6 10l2-6 2 5 3 1" /></>],
  ["추세선", <><path d="M2 12l9-11M1 8h3M6 11l3-5 1 4 3 1" /></>],
  ["전체 지우기", <><path d="M2 7l5-5h5L7 8H2zM2 7v3h5l5-5V2M7 8v2M8.500 9v4M11 9v4M13 9v4" /></>],
  ["차트 겹침", <><path d="M4.500 1.500h9v7h-9zM1.500 5.500h9v7h-9z" /><path d="M2 10l3-2 2 2 3-3" /></>],
  ["돋보기", <><circle cx="6" cy="5.500" r="4" /><path d="M9 8.500l4 4" strokeWidth="2" /></>],
  ["축소", <path d="M2 7h10" strokeWidth="2" />],
  ["확대", <path d="M2 7h10M7 2v10" strokeWidth="2" />],
];
const PLAY = [
  ["재생", <path key="p" d="M5 3l5 4-5 4z" />], ["뒤로", <path key="p" d="M7 3L3 7l4 4zM12 3L8 7l4 4z" />],
  ["정지", <path key="p" d="M3 3h8v8H3z" />], ["앞으로", <path key="p" d="M3 3l4 4-4 4zM8 3l4 4-4 4z" />],
];

const HEADLINE = ["[0601]","주식종합차트","-","유통비율[52.8]","거래대금[70,910(백만)]","시가총액[3,372(억)]","주식수[26,123(천)]","유통수[13,787(천)]","EPS[40]","PBR[8.33]","배당수익률[0]","PER[326.59]","ROA[-0.4]","유보율[210.0]","부채비율[128.0]","영업이익률[3.0]","외국인보유[297(천)]","업종[전기/전자]"];
const LEFT_TICKS = ["15,050","14,870","14,691","14,512","14,333","14,153","13,974","13,795","13,616","13,436","13,257","13,078","12,899","12,720"];
const RIGHT_TICKS = ["70,00","65,00","60,00","55,00","50,00","45,00","40,00","35,00","30,00"];
const LOW_TICKS = ["400,000","200,000","0,00","-200,000"];
const TIMES = ["09:00","09:01","09:02","09:03","09:04","09:07","09:08","09:09","09:10","09:11","09:12","09:13"];

export default function App() {
  return (
    <Frame>
      <Global />
      <TitleBar>
        <Badge>1</Badge>
        <Title>{HEADLINE.map(t => <span key={t}>{t}</span>)}</Title>
        <WinTools>
          {WIN.map(([n, i]) => <WinButton key={n} aria-label={n}>{i}</WinButton>)}
          <WinButton>T</WinButton>
          <WinButton>?</WinButton>
          <WinRule />
          {WIN2.map(([n, i]) => <WinButton key={n} aria-label={n}>{i}</WinButton>)}
        </WinTools>
      </TitleBar>
      <Body>
        <Bar>
          <Group><Tool $first $w={18} aria-label="메뉴"><Svg><path d="M3.500 1.500h9v11h-9zM3.500 3.500h9" /><path d="M1 4v6l4-3z" fill="#333" /></Svg></Tool></Group>
          <Group><Pick $w={16} $color="#777" aria-label="종류"><option>주</option></Pick><Arrow /></Group>
          <Group><Tool $first $w={18}>전</Tool></Group>
          <Group $gap={1}>
            <Field $w={53} aria-label="종목코드" defaultValue="114190" />
            <Arrow />
            <Tool aria-label="검색"><Svg><circle cx="6" cy="6" r="4" stroke="#777" strokeWidth="1.500" /><path d="M9 9l4 4" stroke="#777" strokeWidth="2" /></Svg></Tool>
          </Group>
          <Group>
            <Tool $first $w={14} aria-label="소리"><Svg><path d="M1 5h2l4-3v10L3 9H1z" fill="#555" stroke="none" /><path d="M9.500 4v1M9.500 7v1M9.500 10v1M12 4v1M12 7v1" stroke="#555" /></Svg></Tool>
            <Arrow $w={11} />
          </Group>
          <Group>
            <NewTag>신</NewTag>
            <Field $name $w={61} aria-label="종목명" defaultValue="강원에너지" />
          </Group>
          <Group>{["일", "주", "월", "년"].map((t, i) => <Tool key={t} $first={!i}>{t}</Tool>)}</Group>
          <Group>{["분", "초", "틱"].map((t, i) => <Tool key={t} $first={!i} $on={t === "초"}>{t}</Tool>)}</Group>
          <Group>{["1", "5", "10", "60", "180", "300", "600", "3600"].map((t, i) => <Tool key={t} $digits $first={!i} $on={t === "5"}>{t}</Tool>)}</Group>
          <Group><Pick $w={23} $pad={8} aria-label="주기"><option>5</option></Pick><Arrow /></Group>
          <Group><Field $w={28} $align="right" aria-label="봉 수" defaultValue="135" /></Group>
          <Count>/5400</Count>
          <Group $gap={1}>
            <Tool $first $w={18} aria-label="봉 추가"><Svg><path d="M3.500 0v9M8 0v8" /><path d="M2 2h3v5H2z" fill="#333" /><path d="M7 2h2v4H7z" fill="#999" stroke="#999" /><path d="M8 11h6M11 8v6" strokeWidth="2" /></Svg></Tool>
            <Tool aria-label="지표 추가"><Svg><path d="M0 3l3-2 3 4 3-4 3 4M0 5l4-3 4 3 5-4" stroke="#777" /><path d="M7 11h6M10 8v6" strokeWidth="2" /></Svg></Tool>
            <Tool aria-label="저장"><Svg><path d="M1.500 1.500h10l1 1v10h-11zM4 1.500v4h6v-4M3.500 12.500v-5h7v5" strokeWidth="1.500" stroke="#555" /></Svg></Tool>
            <Tool aria-label="설정"><Svg><circle cx="7" cy="7" r="3.500" stroke="#555" strokeWidth="2" /><circle cx="7" cy="7" r="5.500" stroke="#555" strokeWidth="2" strokeDasharray="2 2.300" /></Svg></Tool>
          </Group>
          <Check><input type="checkbox" />D</Check>
        </Bar>
        <Bar $info>
          <Quote>
            <QuoteCell $w={172}><Num $c="#e81808" $w={50}>12,910▲</Num><Num $c="#e81808" $w={48}>210</Num><Num $c="#e81808" $w={48}>+1.65%</Num></QuoteCell>
            <QuoteCell $w={170}><Num>5,067,153</Num><Num $c="#1048c8" $w={58}>53.23%</Num><Num $w={42}>19.40%</Num></QuoteCell>
            <QuoteCell $w={82}><Num>70,910백만</Num></QuoteCell>
            <QuoteCell $w={140} $just="space-between"><dt>최우선</dt><Num $c="#e81808">12,910</Num><Num $c="#e81808">12,900</Num></QuoteCell>
            <QuoteCell $w={184} $just="space-between"><dt>시</dt><Num $c="#e81808">13,010</Num><dt>고</dt><Num $c="#e81808">15,070</Num><dt>저</dt><Num>12,700</Num></QuoteCell>
          </Quote>
          <Order $bg="#f6d0cb">매수</Order>
          <Order $bg="#c5dcf3">매도</Order>
        </Bar>
        <Work>
          <Chart>
            <Axis $side="left">
              <TableButton aria-label="표"><Svg s={10}><path d="M1 1h12v12H1zM1 5h12M1 9h12M5 1v12M9 1v12" strokeWidth="1.500" /></Svg></TableButton>
              {LEFT_TICKS.map(t => <Tick key={t}>{t}</Tick>)}
              <PriceTag $side="left" style={paneY(332)}><span>4,390</span><b>1,31%</b></PriceTag>
              <CursorTag $side="left" style={paneY(440)}>13,991<b>10,17%</b></CursorTag>
            </Axis>
            <Axis $side="left" $low>
              <TickMarks left major={LOW_MAJOR} minor={LOW_MINOR} h={143} top={895} />
              {LOW_TICKS.map(t => <Tick key={t}>{t}</Tick>)}
            </Axis>
            <Plot>
              <PlotDrawing />
              <Legend><i /><button>강원에너지 매물대 수(13)</button></Legend>
              {NOTES.map(([x, y, c, t]) => (
                <Note key={t} $c={c} style={x === null ? { right: 4, top: py(y) } : { left: px(x), top: py(y) }}>{t}</Note>
              ))}
              {SIGNALS.map(([x, y]) => <Note key={x} $bold $c="#dc0a28" style={{ left: px(x), top: py(y) }}>2</Note>)}
            </Plot>
            <Axis $side="right">
              <TickMarks major={MAIN_MAJOR} minor={MAIN_MINOR} h={817} top={77} />
              <Limits><span>LC:13,31</span><span>HC:-4,51</span></Limits>
              {RIGHT_TICKS.map(t => <Tick key={t}>{t}</Tick>)}
              <PriceTag $side="right" style={paneY(332)}><span>14,390</span><b>13,31%</b></PriceTag>
              <CursorTag $side="right" style={paneY(440)}>13,991<b>-10,17%</b></CursorTag>
            </Axis>
            <Axis $side="right" $low>
              <TickMarks major={LOW_MAJOR} minor={LOW_MINOR} h={143} top={895} />
              <ClosePane aria-label="닫기"><Svg s={6}><path d="M2 2l10 10M12 2L2 12" strokeWidth="2" /></Svg></ClosePane>
              {LOW_TICKS.map(t => <Tick key={t}>{t}</Tick>)}
            </Axis>
            <TimeCorner />
            <Times>
              {TIMES.map((t, i) => <TimeCell key={t} $first={!i}>{t}</TimeCell>)}
              <TimeCursor style={{ left: px(1169), width: `${(136 / 1817) * 100}%` }}>2025/07/15(화) 09:09:40</TimeCursor>
            </Times>
            <TimeEnd>09:13:3</TimeEnd>
          </Chart>
          <Foot>
            <Raised aria-label="왼쪽"><Svg s={12} fill="#000"><path d="M9 3L5 7l4 4z" /></Svg></Raised>
            <Scroll type="range" aria-label="위치" min="0" max="1000" defaultValue="275" />
            {PLAY.map(([n, d]) => <Raised key={n} aria-label={n}><Svg s={13} fill="#000">{d}</Svg></Raised>)}
            <Zoom type="range" aria-label="간격" min="0" max="100" defaultValue="4" />
            {MINI.map(([n, d, on]) => <Mini key={n} $on={on} aria-label={n}><Svg>{d}</Svg></Mini>)}
            <Mini>A</Mini>
          </Foot>
        </Work>
      </Body>
    </Frame>
  );
}
